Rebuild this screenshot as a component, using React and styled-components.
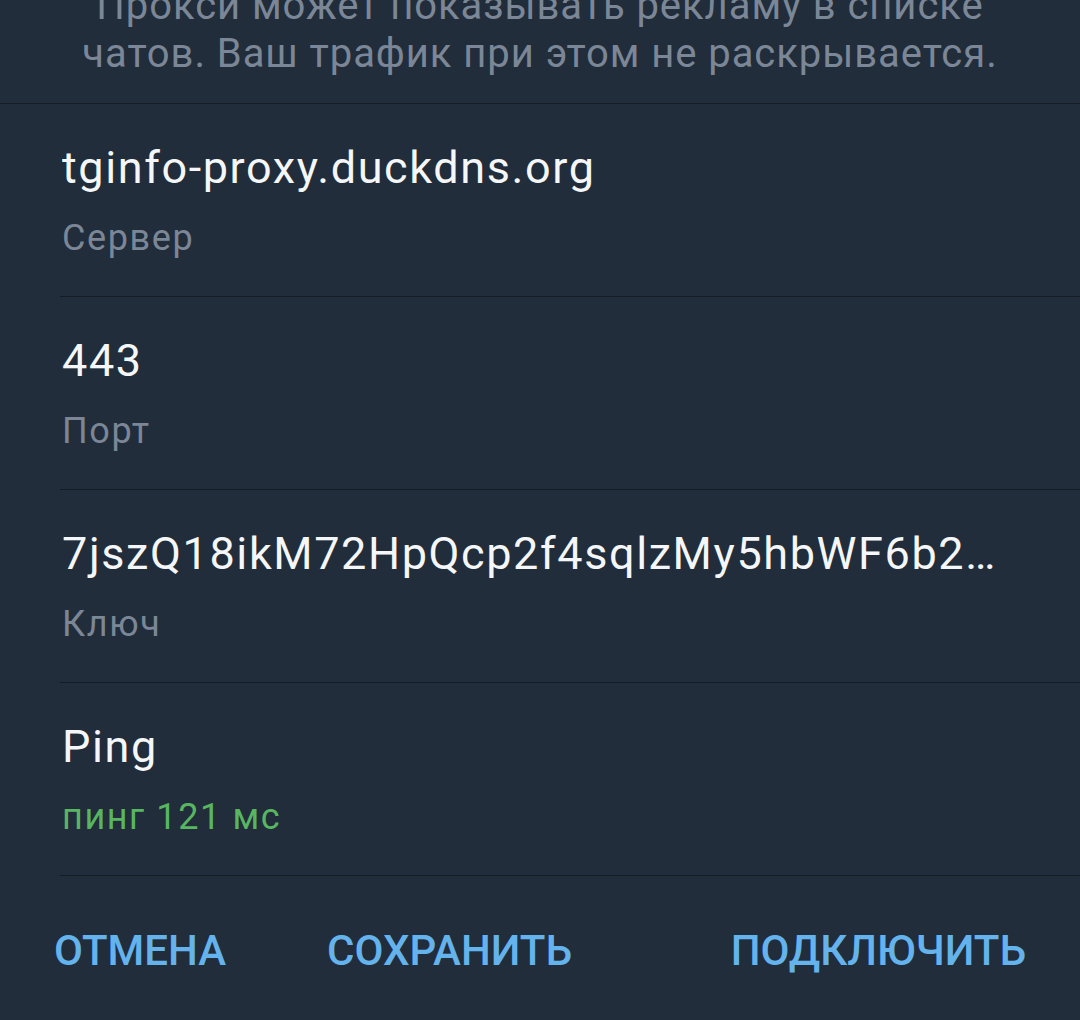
import React from "react";
import styled, { createGlobalStyle } from "styled-components";

const Global = createGlobalStyle`
  html, body {
    margin: 0;
    padding: 0;
    background: #212d3b;
    overflow: hidden;
  }
  body {
    font-family: Roboto, "Noto Sans", "Liberation Sans", sans-serif;
  }
`;

const Sheet = styled.div`
  width: 1080px;
  height: 1020px;
  background: #212d3b;
  display: flex;
  flex-direction: column;
  overflow: hidden;
`;

const Notice = styled.div`
  margin-top: -18px;
  padding: 0 0 25px;
  border-bottom: 1px solid #141c25;
  text-align: center;
  color: #7b8796;
  font-size: 40px;
  line-height: 48px;
  letter-spacing: 0.95px;
`;

const Field = styled.div`
  margin-left: 60px;
  padding: 38px 40px 0 2px;
  height: 193px;
  box-sizing: border-box;
  border-bottom: 1px solid #141c25;
  display: flex;
  flex-direction: column;
  gap: 24px;
`;

const Value = styled.div`
  color: #f4f6f8;
  font-size: 45px;
  line-height: 52px;
  letter-spacing: 1.6px;
  white-space: nowrap;
  overflow: hidden;
`;

const Label = styled.div`
  color: ${(p) => (p.$ok ? "#58b661" : "#7b8796")};
  font-size: 36px;
  line-height: 40px;
  letter-spacing: 1.6px;
`;

const Actions = styled.div`
  display: flex;
  align-items: center;
  padding: 50px 54px 0 54px;
`;

const Action = styled.div`
  color: #64b3ec;
  font-size: 42px;
  font-weight: 500;
  line-height: 50px;
  text-transform: uppercase;
  margin-left: ${(p) => (p.$push ? "auto" : "0")};
`;

const Left = styled.div`
  display: flex;
  gap: 101px;
`;

const fields = [
  { value: "tginfo-proxy.duckdns.org", label: "Сервер" },
  { value: "443", label: "Порт" },
  { value: "7jszQ18ikM72HpQcp2f4sqlzMy5hbWF6b2…", label: "Ключ" },
  { value: "Ping", label: "пинг 121 мс", ok: true },
];

export default function App() {
  return (
    <>
      <Global />
      <Sheet>
        <Notice>
          Прокси может показывать рекламу в списке
          <br />
          чатов. Ваш трафик при этом не раскрывается.
        </Notice>
        {fields.map((f) => (
          <Field key={f.label}>
            <Value>{f.value}</Value>
            <Label $ok={f.ok}>{f.label}</Label>
          </Field>
        ))}
        <Actions>
          <Left>
            <Action>Отмена</Action>
            <Action>Сохранить</Action>
          </Left>
          <Action $push>Подключить</Action>
        </Actions>
      </Sheet>
    </>
  );
}
